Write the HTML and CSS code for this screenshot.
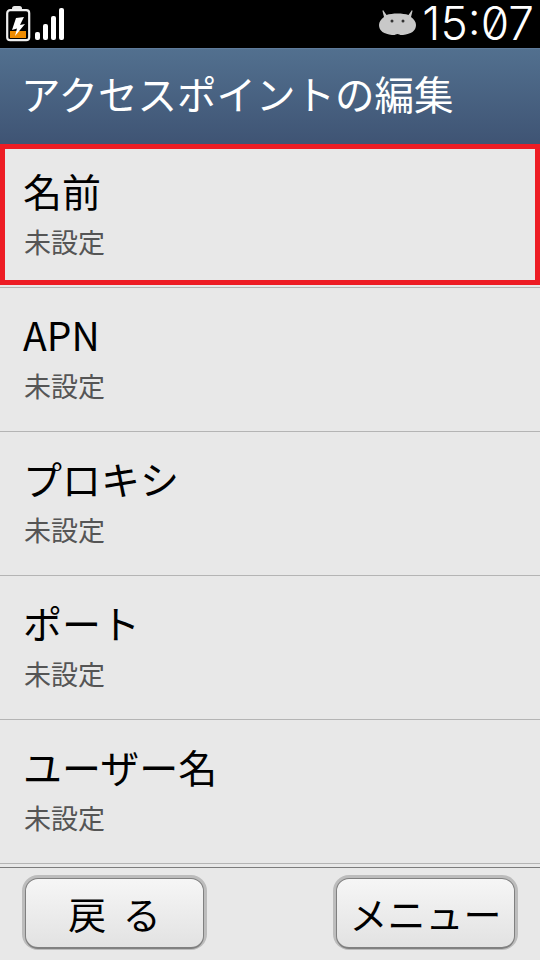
FILE: index.html
```html
<!DOCTYPE html>
<html lang="ja">
<head>
    <meta charset="UTF-8">
    <meta name="viewport" content="width=device-width, initial-scale=1.0">
    <title>アクセスポイントの編集</title>
    <link rel="stylesheet" href="styles.css">
</head>
<body>
    <div class="screen">
        <div class="status-bar">
            <svg class="battery" width="32" height="44" viewBox="0 0 32 44">
                <rect x="12" y="6" width="10" height="5" rx="2.5" fill="#e8e8e8"/>
                <rect x="7.2" y="10.2" width="22" height="30" rx="3" fill="#000" stroke="#f0f0f0" stroke-width="2.2"/>
                <rect x="10" y="31" width="16" height="7" fill="#f08c00"/>
                <path d="M24 17 L16 18 L12 30 L17 28.5 L15 36 L25 24 L20 25 Z" fill="#fff"/>
            </svg>
            <div class="signal">
                <span class="signal-bar bar-1"></span>
                <span class="signal-bar bar-2"></span>
                <span class="signal-bar bar-3"></span>
                <span class="signal-bar bar-4"></span>
            </div>
            <div class="spacer"></div>
            <svg class="droid" width="37" height="26" viewBox="0 0 37 26">
                <path d="M4 0 L7.500 5 C13 3 24 3 29.500 5 L33 0 L33.500 1 L32 7 C35 9 37 12 37 15 C37 21 32 24 24 25 C21 25.500 20 24 18.500 24 C17 24 16 25.500 13 25 C5 24 0 21 0 15 C0 12 2 9 5 7 L3.500 1 Z" fill="#c8c8c8"/>
                <circle cx="13" cy="11" r="1.500" fill="#333"/>
                <circle cx="24" cy="11" r="1.500" fill="#333"/>
            </svg>
            <div class="clock">15:07</div>
        </div>

        <div class="title-bar">アクセスポイントの編集</div>

        <div class="list">
            <div class="row row-selected">
                <div class="row-title">名前</div>
                <div class="row-value">未設定</div>
            </div>
            <div class="row">
                <div class="row-title">APN</div>
                <div class="row-value">未設定</div>
            </div>
            <div class="row">
                <div class="row-title">プロキシ</div>
                <div class="row-value">未設定</div>
            </div>
            <div class="row">
                <div class="row-title">ポート</div>
                <div class="row-value">未設定</div>
            </div>
            <div class="row">
                <div class="row-title">ユーザー名</div>
                <div class="row-value">未設定</div>
            </div>
        </div>

        <div class="footer">
            <div class="btn-frame"><button class="btn">戻 る</button></div>
            <div class="btn-frame"><button class="btn">メニュー</button></div>
        </div>
    </div>
</body>
</html>
```

FILE: styles.css
```css
* {
    box-sizing: border-box;
}

body {
    margin: 0;
    padding: 0;
    background-color: #e8e8e8;
    font-family: "Noto Sans CJK JP", "Noto Sans", sans-serif;
}

.screen {
    width: 540px;
    height: 960px;
    display: flex;
    flex-direction: column;
    overflow: hidden;
}

.status-bar {
    height: 48px;
    background-color: #000;
    display: flex;
    align-items: flex-start;
    flex-shrink: 0;
    padding-right: 6px;
}

.signal {
    display: flex;
    align-items: flex-end;
    gap: 3px;
    height: 32px;
    margin: 8px 0 0 3px;
}

.signal-bar {
    width: 5px;
    background-color: #fff;
    border-radius: 2px;
}

.bar-1 { height: 8px; }
.bar-2 { height: 16px; }
.bar-3 { height: 24px; }
.bar-4 { height: 32px; }

.spacer {
    flex: 1;
}

.droid {
    margin-top: 10px;
}

.clock {
    margin-left: 6px;
    color: #fff;
    font-family: Inter, "DejaVu Sans", sans-serif;
    font-size: 46px;
    font-weight: 300;
    font-feature-settings: "zero" 1;
    line-height: 47px;
    white-space: nowrap;
}

.title-bar {
    height: 96px;
    flex-shrink: 0;
    padding-left: 21px;
    background: linear-gradient(#52708f, #3f5474);
    border-top: 1px solid #5f7b9b;
    color: #fff;
    font-size: 39.5px;
    font-weight: 400;
    line-height: 88px;
    white-space: nowrap;
}

.list {
    flex: 1;
    min-height: 0;
}

.row {
    height: 144px;
    padding: 20px 0 0 24px;
    border-bottom: 1px solid #b4b4b4;
}

.row-selected {
    position: relative;
}

.row-selected::after {
    content: "";
    box-sizing: border-box;
    position: absolute;
    left: 0;
    right: 0;
    top: 0;
    height: 141px;
    border: 5px solid #ed1c24;
}

.row-title {
    margin-left: -1px;
    color: #000;
    font-size: 39px;
    font-weight: 400;
    line-height: 52px;
    white-space: nowrap;
}

.row-value {
    margin-top: 3px;
    color: #555;
    font-size: 27px;
    font-weight: 400;
    line-height: 46px;
}

.footer {
    height: 93px;
    flex-shrink: 0;
    display: flex;
    justify-content: space-between;
    padding: 7px 22px 0 22px;
    border-top: 1px solid #7c7c7c;
}

.btn-frame {
    width: 185px;
    height: 75px;
    padding: 3px 3px 1px 3px;
    border-radius: 16px;
    background-color: #bcbcbc;
}

.btn {
    display: block;
    width: 100%;
    height: 100%;
    padding: 0;
    border: 1px solid #808080;
    border-bottom-width: 2px;
    border-radius: 13px;
    background: linear-gradient(#f6f6f6, #e2e2e2);
    color: #000;
    font-family: inherit;
    font-size: 38px;
    font-weight: 400;
    line-height: 66px;
    word-spacing: 8px;
    white-space: nowrap;
}
```
